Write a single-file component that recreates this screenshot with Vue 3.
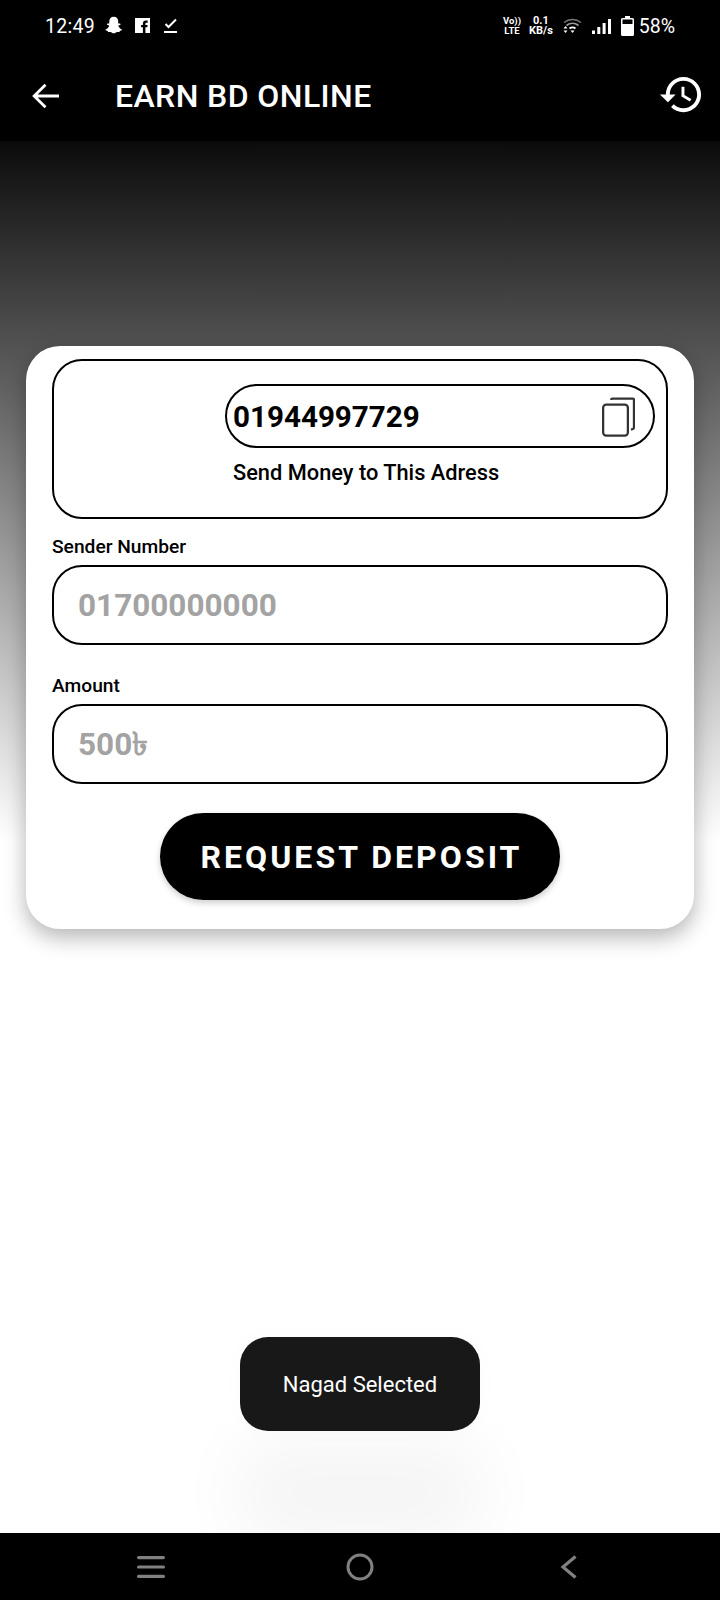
<template>
  <div class="screen">
    <header class="top">
      <div class="status">
        <div class="status-left">
          <span class="clock">12:49</span>
          <svg class="ic-ghost" viewBox="0 0 24 24" fill="#fff"><path d="M12 2c3 0 5 2.200 5 5.200v2.300c.6.200 1.200-.1 1.700-.1.600 0 1 .4 1 .8 0 .9-1.900 1-2.400 1.600-.2.400.1 1 .5 1.700.7 1.200 1.800 2.200 3.200 2.600.4.100.5.400.3.700-.4.600-1.700.9-2.500 1-.2.400-.1 1-.5 1.100-.7.200-1.600-.2-2.600 0-1.200.3-2 1.600-3.700 1.600s-2.500-1.300-3.700-1.600c-1-.2-1.900.2-2.600 0-.4-.1-.3-.7-.5-1.100-.8-.1-2.100-.4-2.500-1-.2-.3-.1-.6.3-.7 1.400-.4 2.500-1.400 3.200-2.600.4-.7.7-1.300.5-1.700-.5-.6-2.400-.7-2.400-1.600 0-.4.4-.8 1-.8.500 0 1.100.3 1.700.1V7.200C7 4.200 9 2 12 2z"/></svg>
          <svg class="ic-fb" viewBox="0 0 15 15" fill="#fff"><path d="M0 0h15v15h-4.600V9.300h1.900l.3-2.200h-2.200V5.800c0-.7.2-1.100 1.100-1.100h1.200V2.700c-.2 0-.9-.1-1.800-.1-1.800 0-3 1.100-3 3.100v1.400H6.100v2.200h1.800V15H0z"/></svg>
          <svg class="ic-check" viewBox="0 0 13 15" fill="none" stroke="#fff" stroke-width="2"><path d="M1.500 6l3 3L12 1.500"/><path d="M0 14h13"/></svg>
        </div>
        <div class="status-right">
          <span class="volte"><span>Vo))</span><span>LTE</span></span>
          <span class="speed"><span>0.1</span><span>KB/s</span></span>
          <svg class="ic-wifi" viewBox="0 0 19 16" fill="none">
            <path d="M1 4.500C6 .5 13 .5 18 4.500" stroke="#777" stroke-width="1.600"/>
            <path d="M3.500 7.500c3.600-2.800 8.400-2.800 12 0" stroke="#999" stroke-width="1.600"/>
            <path d="M6.500 10.500c1.900-1.400 4.100-1.400 6 0" stroke="#fff" stroke-width="1.800"/>
            <path d="M9.500 15l-2-2.500h4z" fill="#fff"/>
            <path d="M2.500 8l2 2.500h-4zM2.500 15l-2-2.500h4z" fill="#fff"/>
          </svg>
          <svg class="ic-signal" viewBox="0 0 19 15" fill="#fff"><rect x="0" y="11.500" width="3" height="3.500"/><rect x="5.300" y="8" width="3" height="7"/><rect x="10.600" y="4" width="3" height="11"/><rect x="16" y="0" width="3" height="15"/></svg>
          <svg class="ic-batt" viewBox="0 0 13 20" fill="#fff"><path d="M4 0h5v2H4z"/><path d="M1.500 2h10a1.500 1.500 0 011.500 1.500V18.500a1.500 1.500 0 01-1.500 1.500h-10A1.500 1.500 0 010 18.500V3.500A1.500 1.500 0 011.500 2zM1.500 3.500v4.500h10V3.500z" fill-rule="evenodd"/></svg>
          <span class="pct">58%</span>
        </div>
      </div>
      <div class="appbar">
        <svg class="ic-back" viewBox="0 0 25 24" fill="none" stroke="#fff" stroke-width="2.600"><path d="M12.500 1.500L2 12l10.500 10.500M2 12h23"/></svg>
        <span class="title">EARN BD ONLINE</span>
        <svg class="ic-history" viewBox="0 0 24 24" fill="#fff"><path d="M13 3c-4.970 0-9 4.030-9 9H1l3.890 3.890.07.140L9 12H6c0-3.870 3.130-7 7-7s7 3.130 7 7-3.130 7-7 7c-1.930 0-3.680-.79-4.940-2.060l-1.420 1.420C8.270 19.990 10.510 21 13 21c4.970 0 9-4.030 9-9s-4.030-9-9-9zm-1 5v5l4.280 2.540.72-1.210-3.500-2.080V8H12z"/></svg>
      </div>
    </header>

    <main class="body">
      <section class="card">
        <div class="pay-box">
          <div class="pay-col">
            <div class="number-pill">
              <span class="number">{{ payNumber }}</span>
              <svg class="ic-copy" viewBox="0 0 32 38" fill="none" stroke="#333" stroke-width="2.200">
                <rect x="1.100" y="7" width="24" height="30" rx="3"/>
                <path d="M9 2.500V2.100A1 1 0 0 1 10 1.100h20A1 1 0 0 1 31 2.100V29a2 2 0 0 1-2 2h-1"/>
              </svg>
            </div>
            <p class="pay-note">Send Money to This Adress</p>
          </div>
        </div>

        <label class="field-label sender-label">Sender Number</label>
        <input class="field" placeholder="01700000000" />

        <label class="field-label amount-label">Amount</label>
        <input class="field" placeholder="500৳" />

        <button class="deposit">REQUEST DEPOSIT</button>
      </section>

      <div class="toast">Nagad Selected</div>
    </main>

    <nav class="navbar">
      <svg class="ic-menu" viewBox="0 0 28 22" fill="#808080"><rect y="0" width="28" height="3.200" rx="1.600"/><rect y="9.400" width="28" height="3.200" rx="1.600"/><rect y="18.800" width="28" height="3.200" rx="1.600"/></svg>
      <svg class="ic-home" viewBox="0 0 28 28" fill="none" stroke="#808080" stroke-width="3"><circle cx="14" cy="14" r="12"/></svg>
      <svg class="ic-tri" viewBox="0 0 18 24" fill="none" stroke="#808080" stroke-width="3.200"><path d="M15.500 1.500L3 12l12.500 10.500"/></svg>
    </nav>
  </div>
</template>

<script setup>
const payNumber = '01944997729'
</script>

<style>
html, body { margin: 0; background: #fff; }
</style>

<style scoped>
.screen {
  width: 720px;
  height: 1600px;
  display: flex;
  flex-direction: column;
  overflow: hidden;
  font-family: Roboto, "Liberation Sans", sans-serif;
  color: #000;
}

.top { background: #000; color: #fff; height: 141px; flex: none; }

.status {
  height: 52px;
  display: flex;
  justify-content: space-between;
  align-items: center;
  padding: 0 45px;
}
.status-left, .status-right { display: flex; align-items: center; }
.clock { font-size: 19.500px; letter-spacing: .3px; margin-right: 8px; }
.ic-ghost { width: 21.500px; height: 21.500px; margin-right: 10px; margin-bottom: 1px; }
.ic-fb { width: 15px; height: 15px; margin-right: 14px; margin-bottom: 1px; }
.ic-check { width: 13px; height: 15px; margin-bottom: 1px; }

.volte, .speed {
  display: flex;
  flex-direction: column;
  align-items: center;
  font-weight: 700;
  line-height: 10px;
}
.volte { font-size: 9.500px; }
.speed { margin-left: 8px; font-size: 11px; }
.ic-wifi { width: 19px; height: 16px; margin-left: 10px; }
.ic-signal { width: 19px; height: 15px; margin-left: 10px; }
.ic-batt { width: 13px; height: 20px; margin-left: 10px; }
.pct { font-size: 19.500px; margin-left: 5px; }

.appbar {
  height: 88px;
  display: flex;
  align-items: center;
  padding-left: 32px;
}
.ic-back { width: 27px; height: 26px; flex: none; }
.title { font-size: 32px; font-weight: 500; letter-spacing: .4px; margin-left: 56px; }
.ic-history { width: 47px; height: 47px; margin-left: auto; margin-right: 15px; margin-bottom: 4px; }

.body {
  flex: 1;
  position: relative;
  background: linear-gradient(#0b0b0b 0, #fff 700px);
}

.card {
  margin: 205px 26px 0;
  height: 583px;
  box-sizing: border-box;
  padding: 13px 26px 0;
  background: #fff;
  border-radius: 34px;
  box-shadow: 0 8px 22px rgba(0, 0, 0, .3);
  display: flex;
  flex-direction: column;
}

.pay-box {
  height: 160px;
  flex: none;
  box-sizing: border-box;
  border: 2px solid #000;
  border-radius: 30px;
  padding: 23px 11px 0 0;
  display: flex;
  justify-content: flex-end;
}
.pay-col { width: 430px; }
.number-pill {
  height: 64px;
  box-sizing: border-box;
  border: 2px solid #000;
  border-radius: 32px;
  display: flex;
  align-items: center;
  justify-content: space-between;
  padding: 0 18px 0 6px;
}
.number { font-size: 29.600px; font-weight: 700; margin-top: 1px; }
.ic-copy { width: 33px; height: 40px; margin-top: 2px; }
.pay-note {
  margin: 11px 0 0 8px;
  font-size: 21.800px;
  font-weight: 500;
  line-height: 28px;
}

.field-label { font-size: 19.200px; font-weight: 500; line-height: 24px; }
.sender-label { margin-top: 16px; }
.amount-label { margin-top: 29px; }

.field {
  flex: none;
  height: 80px;
  margin-top: 6px;
  box-sizing: border-box;
  border: 2px solid #000;
  border-radius: 30px;
  background: #fff;
  padding: 0 24px;
  font: 700 31.500px Roboto, sans-serif;
  outline: none;
}
.field::placeholder { color: #a3a3a3; opacity: 1; }

.deposit {
  align-self: center;
  flex: none;
  width: 400px;
  height: 87px;
  margin-top: 29px;
  border: none;
  border-radius: 44px;
  background: #000;
  color: #fff;
  font: 700 32px Roboto, sans-serif;
  letter-spacing: 3.050px;
  padding: 0 0 0 3px;
  box-shadow: 0 3px 6px rgba(0, 0, 0, .2);
}

/* snackbar-style toast, floats over the page */
.toast {
  position: absolute;
  left: 240px;
  top: 1196px;
  width: 240px;
  height: 94px;
  border-radius: 28px;
  background: #181818;
  color: #fff;
  font-size: 22px;
  display: flex;
  align-items: center;
  justify-content: center;
  box-shadow: 0 109px 70px 4px rgba(0, 0, 0, .042), 0 0 26px rgba(0, 0, 0, .02);
}

.navbar {
  position: relative;
  height: 67px;
  flex: none;
  background: #000;
  display: grid;
  grid-template-columns: repeat(3, 1fr);
  align-items: center;
  justify-items: center;
}
.ic-menu { width: 28px; height: 22px; margin-left: 62px; }
.ic-home { width: 28px; height: 28px; }
.ic-tri { width: 18px; height: 24px; margin-right: 63px; }
</style>
